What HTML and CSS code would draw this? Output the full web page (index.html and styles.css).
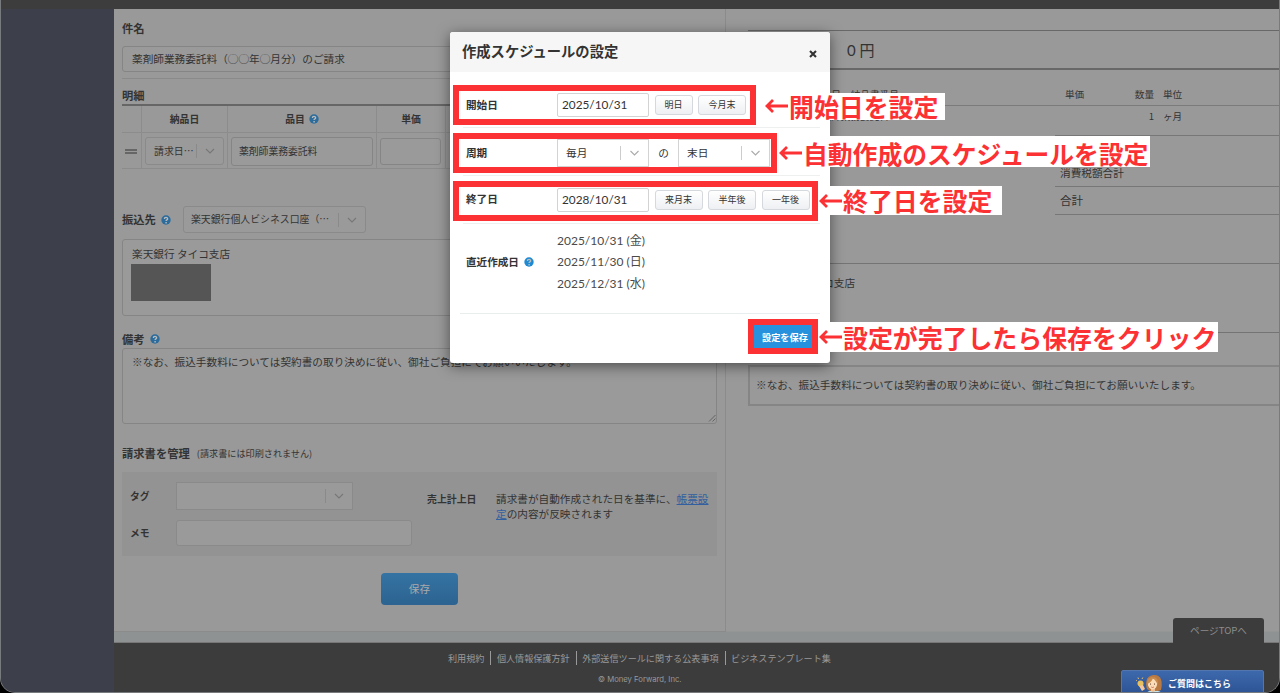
FILE: index.html
```html
<!DOCTYPE html>
<html lang="ja">

<head>
    <meta charset="utf-8">
    <title>請求書の自動作成</title>
    <link rel="stylesheet" href="styles.css">
</head>

<body>
<svg class="defs" width="0" height="0">
    <symbol id="chevron" viewBox="0 0 10 6"><path d="M1 1l4 4 4-4" fill="none" stroke="currentColor" stroke-width="1.1"/></symbol>
    <symbol id="help" viewBox="0 0 10 10"><circle cx="5" cy="5" r="4.7" fill="currentColor"/><path class="mark-q" d="M3.4 4c0-2.200 3.200-2.200 3.200-.1 0 1-1.500 1-1.500 2.100M5.100 7v1.400"/></symbol>
</svg>
<div class="window">
    <div class="topbar"></div>
    <div class="page">
        <div class="sidebar"></div>
        <div class="content">
            <div class="columns">
                <div class="form">
                    <h2 class="subject-title">件名</h2>
                    <div class="input subject">薬剤師業務委託料（◯◯年◯月分）のご請求</div>
                    <h2 class="detail-title">明細</h2>
                    <div class="items">
                        <div class="items-row items-head">
                            <div></div>
                            <div>納品日</div>
                            <div>品目 <svg class="help"><use href="#help"/></svg></div>
                            <div>単価</div>
                            <div></div>
                        </div>
                        <div class="items-row items-body">
                            <div><span class="handle"></span></div>
                            <div><div class="select date-type"><span>請求日⋯</span><svg class="chevron"><use href="#chevron"/></svg></div></div>
                            <div><div class="input item-name">薬剤師業務委託料</div></div>
                            <div><div class="input price"></div></div>
                            <div></div>
                        </div>
                    </div>
                    <div class="bank-line">
                        <h2>振込先</h2>
                        <svg class="help"><use href="#help"/></svg>
                        <div class="select bank"><span>楽天銀行個人ビシネス口座（⋯</span><svg class="chevron"><use href="#chevron"/></svg></div>
                    </div>
                    <div class="textarea bank-text">
                        <div>楽天銀行 タイコ支店</div>
                        <div class="masked"></div>
                    </div>
                    <div class="note-line">
                        <h2>備考</h2>
                        <svg class="help"><use href="#help"/></svg>
                    </div>
                    <div class="textarea note-text">※なお、振込手数料については契約書の取り決めに従い、御社ご負担にてお願いいたします。
                        <svg class="resize" viewBox="0 0 8 8"><path d="M1 7.5L7.5 1M4.5 7.5l3-3" stroke="#555" stroke-width=".8"/></svg>
                    </div>
                    <div class="manage-line"><h2>請求書を管理</h2><small>(請求書には印刷されません)</small></div>
                    <div class="manage">
                        <div class="manage-left">
                            <div class="manage-row"><b>タグ</b><div class="select tag"><span></span><svg class="chevron"><use href="#chevron"/></svg></div></div>
                            <div class="manage-row"><b>メモ</b><div class="input memo"></div></div>
                        </div>
                        <b class="sales-label">売上計上日</b>
                        <p>請求書が自動作成された日を基準に、<a>帳票設定</a>の内容が反映されます</p>
                    </div>
                    <div class="save">保存</div>
                </div>
                <div class="preview">
                    <div class="total">0 円</div>
                    <div class="p-row p-head"><span class="p-name"><span>納品日</span><span>納品書番号</span></span><span class="p-price">単価</span><span class="p-count">数量</span><span>単位</span></div>
                    <div class="p-row p-item"><span class="p-name">薬剤師業務委託料</span><span class="p-price"></span><span class="p-count">1</span><span>ヶ月</span></div>
                    <div class="sums">
                        <div class="sum-first"></div>
                        <div class="sum-tax">消費税額合計</div>
                        <div class="sum-all">合計</div>
                    </div>
                    <div class="p-bank">楽天銀行 タイコ支店</div>
                    <div class="p-gap"></div>
                    <div class="p-note">※なお、振込手数料については契約書の取り決めに従い、御社ご負担にてお願いいたします。</div>
                </div>
            </div>
            <div class="footer">
                <div class="links"><span>利用規約</span><span>個人情報保護方針</span><span>外部送信ツールに関する公表事項</span><span>ビジネステンプレート集</span></div>
                <div class="copy">© Money Forward, Inc.</div>
            </div>
        </div>
    </div>
    <div class="page-top">ページTOPへ</div>
    <div class="chat">
        <svg class="lady" viewBox="0 0 28 20">
            <path d="M9 21c1-6 17-6 18 0z" fill="#c5e6ee"/>
            <path d="M11 15c-2-6-1-13 6-14 8-1 10 6 8 15l-3 1h-8z" fill="#b87a42"/>
            <path d="M15 13h4v4l-2 1-2-1z" fill="#efbd90"/>
            <ellipse cx="16.500" cy="10" rx="4.600" ry="5.400" fill="#fbdcb8"/>
            <path d="M11.500 10c-1-5 2-7 5.500-7 0 3-2 5-5.500 7zM17 3c3 0 5.500 2 5 8-1-3-4-5-5-8z" fill="#c98c4e"/>
            <path d="M14.500 9.500v1.200M18.500 9.500v1.200" stroke="#5a3520" stroke-width=".8"/>
            <path d="M15.300 13q1.300 1 2.600 0" stroke="#c55545" fill="none" stroke-width=".8"/>
            <circle cx="4.500" cy="9.500" r="3" fill="#e8c060"/>
            <path d="M3 12l4-1 2 4-3 2z" fill="#f4c59a"/>
            <path d="M.6 7L0 6M2.500 5L2 3.500M6 5l.8-1.500" stroke="#e8c070"/>
        </svg>
        <span>ご質問はこちら</span>
    </div>

    <div class="modal">
        <div class="modal-head">
            <span>作成スケジュールの設定</span>
            <svg class="close" viewBox="0 0 8 8"><path d="M1 1l6 6M7 1l-6 6" stroke="#333" stroke-width="2.100"/></svg>
        </div>
        <div class="modal-body">
            <div class="row">
                <div class="mark mark-start">
                    <b>開始日</b><div class="date">2025/10/31</div>
                    <div class="btn short">明日</div><div class="btn">今月末</div>
                </div>
            </div>
            <div class="row">
                <div class="mark mark-cycle">
                    <b>周期</b>
                    <div class="drop"><span>毎月</span><svg class="chevron"><use href="#chevron"/></svg></div>
                    <div class="of">の</div>
                    <div class="drop"><span>末日</span><svg class="chevron"><use href="#chevron"/></svg></div>
                </div>
            </div>
            <div class="row">
                <div class="mark mark-end">
                    <b>終了日</b><div class="date">2028/10/31</div>
                    <div class="btn">来月末</div><div class="btn">半年後</div><div class="btn">一年後</div>
                </div>
            </div>
            <div class="recent">
                <b>直近作成日</b>
                <svg class="help"><use href="#help"/></svg>
                <div class="recent-list">
                    <div>2025/10/31 (金)</div>
                    <div>2025/11/30 (日)</div>
                    <div>2025/12/31 (水)</div>
                </div>
            </div>
        </div>
        <div class="modal-foot">
            <div class="mark-save"><div>設定を保存</div></div>
        </div>
    </div>

    <div class="callout c-start"><svg class="arrow" viewBox="0 0 25 20"><path d="M24 10H3M9 4l-6 6 6 6"/></svg>開始日を設定</div>
    <div class="callout c-cycle"><svg class="arrow" viewBox="0 0 25 20"><path d="M24 10H3M9 4l-6 6 6 6"/></svg>自動作成のスケジュールを設定</div>
    <div class="callout c-end"><svg class="arrow" viewBox="0 0 25 20"><path d="M24 10H3M9 4l-6 6 6 6"/></svg>終了日を設定</div>
    <div class="callout c-save"><svg class="arrow" viewBox="0 0 25 20"><path d="M24 10H3M9 4l-6 6 6 6"/></svg>設定が完了したら保存をクリック</div>
</div>
</body>

</html>
```
FILE: styles.css
```css
* {
    box-sizing: border-box;
}

body {
    margin: 0;
    background: #000;
    font-family: "Noto Sans CJK JP", sans-serif;
    font-size: 10.65px;
    color: #333;
    overflow: hidden;
}

h2, p {
    margin: 0;
}

h2 {
    font-size: 11.3px;
    font-weight: 700;
}

.defs {
    position: absolute;
}

.window {
    position: relative;
    width: 1280px;
    height: 693px;
    border: solid #777b7e;
    border-width: 0 1px 1px;
    border-radius: 0 0 15px 15px;
    overflow: hidden;
    background: #3c3c3c;
}

.topbar {
    height: 9px;
    background: #3d3d3d;
}

.page {
    display: flex;
    height: 683px;
}

.sidebar {
    width: 113px;
    background: #3d3f4b;
}

.content {
    flex: 1;
    min-width: 0;
}

.columns {
    display: flex;
    height: 634px;
    background: linear-gradient(#999 622px, #8f9292 623px);
    border-bottom: 1px solid #777;
}

/* form */
.form {
    width: 612px;
    height: 623px;
    padding: 0 8px;
    border-right: 1px solid #8b8b8b;
    border-bottom: 1px solid #8b8b8b;
    flex: none;
}

.input,
.select,
.textarea {
    border: 1px solid #858585;
    border-radius: 3px;
    background: #9a9a9a;
    white-space: nowrap;
}

.help {
    width: 10px;
    height: 10px;
    color: #2b6c9c;
    flex: none;
}

.mark-q {
    fill: none;
    stroke: #bbb;
    stroke-width: 1.4;
}

.chevron {
    width: 10px;
    height: 6px;
    color: #777;
}

.select {
    display: flex;
    align-items: center;
    padding-left: 8px;
    border-color: #8a8a8a;
    font-size: 9.9px;
}

.select span {
    flex: 1;
}

.select .chevron {
    width: 27px;
    border-left: 1px solid #8a8a8a;
    height: 14px;
    padding: 4px 8px;
}

.subject-title {
    height: 37px;
    line-height: 39px;
}

.subject {
    height: 26px;
    line-height: 24px;
    padding-left: 9px;
}

.detail-title {
    margin-top: 6px;
    height: 26px;
    line-height: 33px;
    border-top: 1px solid #8a8a8a;
}

.items {
    border-top: 2px solid #666;
    height: 64px;
    font-size: 9.8px;
}

.items-row {
    display: grid;
    grid-template-columns: 20px 86px 149px 69px 1fr;
    border-bottom: 1px solid #8c8c8c;
}

.items-row > div {
    display: flex;
    align-items: center;
    border-right: 1px solid #8c8c8c;
}

.items-head {
    height: 27px;
    font-weight: 700;
}

.items-head > div {
    justify-content: center;
    gap: 4px;
}

.items-body {
    height: 36px;
}

.items-body > div {
    padding-top: 1px;
}

.handle {
    width: 12px;
    height: 5px;
    margin-left: 3px;
    border: solid #666;
    border-width: 2px 0;
}

.date-type {
    width: 79px;
    height: 28px;
    margin-left: 3px;
}

.item-name {
    width: 142px;
    height: 29px;
    line-height: 27px;
    margin-left: 3px;
    padding-left: 7px;
}

.price {
    width: 61px;
    height: 27px;
    margin-left: 3px;
}

.bank-line {
    display: flex;
    align-items: center;
    height: 27px;
    margin-top: 38px;
}

.bank-line h2 {
    padding-bottom: 1px;
}

.bank-line .help {
    margin: 0 12px 0 5px;
}

.bank {
    width: 183px;
    height: 27px;
    padding-left: 7px;
    line-height: 14px;
}

.bank span {
    padding-bottom: 1px;
}

.textarea {
    position: relative;
    padding-left: 9px;
}

.bank-text {
    height: 77px;
    margin-top: 6px;
    line-height: 28px;
}

.masked {
    width: 80px;
    height: 37px;
    margin: -4px 0 0 -1px;
    background: #555;
}

.note-line {
    display: flex;
    align-items: center;
    gap: 5px;
    height: 19px;
    margin-top: 13px;
}

.note-text {
    height: 76px;
    line-height: 26px;
}

.resize {
    position: absolute;
    right: 0;
    bottom: 1px;
    width: 8px;
    height: 8px;
}

.manage-line {
    display: flex;
    align-items: center;
    gap: 7px;
    height: 20px;
    margin-top: 19px;
}

.manage-line small {
    font-size: 9.15px;
}

.manage {
    display: flex;
    height: 84px;
    margin-top: 9px;
    padding: 10px 8px;
    background: #939393;
}

.manage-left {
    width: 297px;
}

.manage-row {
    display: flex;
    align-items: center;
    height: 28px;
    margin-bottom: 9px;
}

.manage-row b {
    width: 46px;
    font-size: 9.8px;
}

.tag {
    width: 177px;
    height: 28px;
    border-radius: 0;
}

.memo {
    width: 236px;
    height: 26px;
    border-color: #8a8a8a;
}

.sales-label {
    width: 69px;
    font-size: 9.9px;
    line-height: 34px;
}

.manage p {
    width: 215px;
    margin-right: -10px;
    padding-top: 9px;
    line-height: 15px;
}

.manage a {
    color: #315f9f;
    text-decoration: underline;
}

.save {
    width: 77px;
    height: 32px;
    margin: 17px 0 0 259px;
    border-radius: 4px;
    background: linear-gradient(#3573a3, #2c6390);
    color: #aaa;
    line-height: 32px;
    text-align: center;
}

/* preview */
.preview {
    flex: 1;
    margin-left: 22px;
    padding-top: 21px;
    min-width: 0;
}

.total {
    height: 40px;
    border: solid #686868;
    border-width: 1px 0 2px;
    padding-left: 99px;
    font-family: Lato, "Noto Sans CJK JP", sans-serif;
    font-size: 15px;
    line-height: 38px;
}

.p-row {
    display: flex;
    font-size: 9.6px;
}

.p-name {
    display: flex;
    gap: 10px;
    width: 317px;
    padding-left: 64px;
}

.p-price {
    width: 50px;
}

.p-count {
    width: 39px;
    margin-right: 9px;
    text-align: right;
}

.p-head {
    height: 36px;
    line-height: 49px;
    border-bottom: 1px solid #7b7b7b;
}

.p-item {
    height: 29px;
    line-height: 21px;
}

.sums {
    margin-left: 307px;
    border-top: 1px solid #777;
}

.sums div {
    border-bottom: 1px solid #777;
    padding-left: 5px;
}

.sums .sum-first {
    height: 24px;
    border: 0;
}

.sum-tax {
    height: 27px;
    line-height: 25px;
}

.sum-all {
    height: 28px;
    line-height: 27px;
    font-size: 11.6px;
}

.p-bank {
    height: 70px;
    margin-top: 48px;
    padding-left: 9px;
    border: solid #747474;
    border-width: 1px 0;
    line-height: 37px;
}

.p-gap {
    height: 32px;
}

.p-note {
    height: 41px;
    padding-left: 6px;
    border: 2px solid #858585;
    border-right: 0;
    font-size: 10.65px;
    line-height: 36px;
    white-space: nowrap;
}

/* footer */
.footer {
    height: 49px;
    color: #999;
    background: #3c3c3c;
}

.links {
    display: flex;
    padding: 8px 0 0 328px;
    font-size: 9.1px;
    line-height: 14px;
}

.links span {
    padding: 0 6px 0 5.5px;
    border-right: 1px solid #999;
}

.links span:first-child {
    padding-left: 6px;
}

.links span:last-child {
    border: 0;
}

.copy {
    padding: 8px 0 0 484px;
    font-family: Inter, sans-serif;
    font-size: 7.7px;
    line-height: 14px;
}

.page-top {
    position: absolute;
    left: 1172px;
    top: 618px;
    width: 91px;
    height: 26px;
    border-radius: 3px 3px 0 0;
    background: #3c3c3c;
    color: #8c8c8c;
    font-size: 9.6px;
    line-height: 24px;
    text-align: center;
}

.chat {
    position: absolute;
    left: 1120px;
    top: 670px;
    display: flex;
    align-items: center;
    width: 143px;
    height: 26px;
    border: 1px solid #5276ad;
    border-radius: 2px;
    background: linear-gradient(#3d69ac, #2b5293);
    color: #fff;
    font-size: 9px;
    font-weight: 700;
}

.lady {
    width: 28px;
    height: 20px;
    margin: 2px 4px 0 14px;
}

/* modal */
.modal {
    position: absolute;
    left: 449px;
    top: 32px;
    width: 380px;
    height: 331px;
    border-radius: 3px;
    background: #fff;
    box-shadow: 0 3px 14px rgba(0, 0, 0, .5);
}

.modal-head {
    display: flex;
    align-items: center;
    justify-content: space-between;
    height: 40px;
    padding: 0 13px 2px 12px;
    border-radius: 3px 3px 0 0;
    background: #f6f6f6;
    font-size: 14.3px;
    font-weight: 700;
    line-height: 20px;
}

.close {
    width: 8px;
    height: 8px;
    margin-top: 6px;
}

.modal-body {
    height: 241px;
    padding: 8px 3px 0;
}

.row {
    height: 48px;
    padding-top: 5px;
    background: linear-gradient(#eef0f0, #eef0f0) 10px 47px / 357px 1px no-repeat;
}

.mark {
    display: flex;
    align-items: center;
    height: 40px;
    padding-left: 7px;
    border: 6px solid #fb3134;
    background: #fff;
}

.mark-start {
    width: 303px;
}

.mark-cycle {
    width: 324px;
}

.mark-end {
    width: 365px;
    padding-bottom: 3px;
}

.mark b {
    width: 91px;
    font-size: 10.6px;
    line-height: 16px;
    padding-bottom: 1px;
    flex: none;
}

.date {
    width: 92px;
    height: 24px;
    padding-left: 4px;
    border: 1px solid #d3d3d3;
    border-radius: 2px;
    font-family: Lato, sans-serif;
    font-size: 11.8px;
    line-height: 22px;
    flex: none;
}

.btn {
    width: 48px;
    height: 20px;
    margin-left: 5.5px;
    border: 1px solid #d5d8dc;
    border-radius: 3px;
    background: linear-gradient(#fff, #eef0f3);
    font-size: 9px;
    line-height: 17px;
    text-align: center;
    flex: none;
}

.btn.short {
    width: 38px;
}

.drop {
    display: flex;
    align-items: center;
    width: 92px;
    height: 28px;
    padding-left: 8px;
    border: 1px solid #d3d3d3;
    line-height: 16px;
    flex: none;
}

.drop span {
    width: 54px;
    padding-bottom: 1px;
}

.drop .chevron {
    width: 28px;
    height: 14px;
    padding: 4px 8px;
    border-left: 1px solid #ccc;
    color: #aaa;
}

.of {
    width: 29px;
    padding-bottom: 1px;
    text-align: center;
}

.recent {
    display: flex;
    align-items: center;
    height: 76px;
    padding-left: 13px;
}

.recent b {
    width: 58px;
    padding-bottom: 1px;
    font-size: 10.6px;
}

.modal .help {
    color: #1e8ad3;
}

.modal .mark-q {
    stroke: #fff;
}

.recent-list {
    margin-left: 23px;
    font-family: Lato, "Noto Sans CJK JP", sans-serif;
    font-size: 12px;
    line-height: 21.3px;
    color: #4a4a4a;
}

.modal-foot {
    height: 49px;
    margin: 0 10px;
    padding: 5px 2px 0 0;
    border-top: 1px solid #e8eeee;
    display: flex;
    justify-content: flex-end;
}

.mark-save {
    width: 70px;
    height: 35px;
    border: 6px solid #fb3134;
    background: #fff;
}

.mark-save div {
    height: 23px;
    padding-left: 8px;
    background: #2692dd;
    color: #fff;
    font-size: 9.2px;
    font-weight: 700;
    line-height: 25px;
    white-space: nowrap;
}

/* callouts */
.callout {
    position: absolute;
    display: flex;
    align-items: center;
    background: #fff;
    color: #fb3134;
    font-size: 24.9px;
    font-weight: 700;
    line-height: 27px;
    white-space: nowrap;
}

.arrow {
    width: 25px;
    height: 20px;
    fill: none;
    stroke: #fb3134;
    stroke-width: 2.8;
}

.c-start {
    left: 763px;
    top: 93px;
    width: 181px;
    height: 27px;
    padding-bottom: 1px;
}

.c-cycle {
    left: 777px;
    top: 136px;
    width: 372px;
    height: 31px;
    padding-top: 3px;
    font-size: 24.8px;
}

.c-end {
    left: 817px;
    top: 186px;
    width: 184px;
    height: 29px;
}

.c-save {
    left: 817px;
    top: 322px;
    width: 400px;
    height: 30px;
}
```
